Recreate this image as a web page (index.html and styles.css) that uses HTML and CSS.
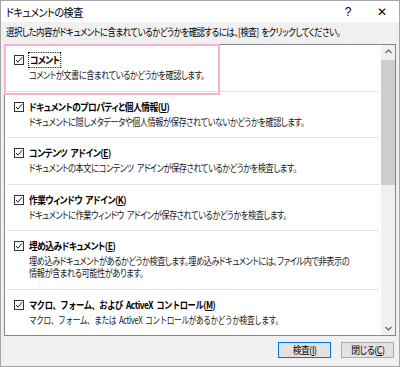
FILE: index.html
```html
<!DOCTYPE html>
<html lang="ja">
<head>
    <meta charset="UTF-8">
    <meta name="viewport" content="width=device-width, initial-scale=1.0">
    <title>ドキュメントの検査</title>
    <link rel="stylesheet" href="styles.css">
</head>
<body>

    <div class="dialog">
        <div class="titlebar">
            <span class="caption"><span class="txt">ドキュメントの検査</span></span>
            <span class="help">?</span>
            <span class="close">✕</span>
        </div>

        <p class="intro"><span class="txt">選択した内容がドキュメントに含まれているかどうかを確認するには、[検査] をクリックしてください。</span></p>

        <div class="listbox">
            <ul class="items">
                <li class="item">
                    <div class="head">
                        <svg class="check" width="10" height="10" viewBox="0 0 10 10"><rect x="0.5" y="0.5" width="9" height="9" fill="#fff" stroke="#333"/><path d="M2 5 L4 7.2 L8 2.2" fill="none" stroke="#222" stroke-width="1"/></svg>
                        <span class="name focus">コメント</span>
                    </div>
                    <div class="desc"><span class="txt">コメントが文書に含まれているかどうかを確認します。</span></div>
                </li>
                <li class="item">
                    <div class="head">
                        <svg class="check" width="10" height="10" viewBox="0 0 10 10"><rect x="0.5" y="0.5" width="9" height="9" fill="#fff" stroke="#333"/><path d="M2 5 L4 7.2 L8 2.2" fill="none" stroke="#222" stroke-width="1"/></svg>
                        <span class="name">ドキュメントのプロパティと個人情報(<u>U</u>)</span>
                    </div>
                    <div class="desc"><span class="txt">ドキュメントに隠しメタデータや個人情報が保存されていないかどうかを確認します。</span></div>
                </li>
                <li class="item">
                    <div class="head">
                        <svg class="check" width="10" height="10" viewBox="0 0 10 10"><rect x="0.5" y="0.5" width="9" height="9" fill="#fff" stroke="#333"/><path d="M2 5 L4 7.2 L8 2.2" fill="none" stroke="#222" stroke-width="1"/></svg>
                        <span class="name">コンテンツ アドイン(<u>E</u>)</span>
                    </div>
                    <div class="desc"><span class="txt">ドキュメントの本文にコンテンツ アドインが保存されているかどうかを検査します。</span></div>
                </li>
                <li class="item">
                    <div class="head">
                        <svg class="check" width="10" height="10" viewBox="0 0 10 10"><rect x="0.5" y="0.5" width="9" height="9" fill="#fff" stroke="#333"/><path d="M2 5 L4 7.2 L8 2.2" fill="none" stroke="#222" stroke-width="1"/></svg>
                        <span class="name">作業ウィンドウ アドイン(<u>K</u>)</span>
                    </div>
                    <div class="desc"><span class="txt">ドキュメントに作業ウィンドウ アドインが保存されているかどうかを検査します。</span></div>
                </li>
                <li class="item">
                    <div class="head">
                        <svg class="check" width="10" height="10" viewBox="0 0 10 10"><rect x="0.5" y="0.5" width="9" height="9" fill="#fff" stroke="#333"/><path d="M2 5 L4 7.2 L8 2.2" fill="none" stroke="#222" stroke-width="1"/></svg>
                        <span class="name">埋め込みドキュメント(<u>E</u>)</span>
                    </div>
                    <div class="desc"><span class="txt wrap">埋め込みドキュメントがあるかどうか検査します。埋め込みドキュメントには、ファイル内で非表示の情報が含まれる可能性があります。</span></div>
                </li>
                <li class="item plain">
                    <div class="head">
                        <svg class="check" width="10" height="10" viewBox="0 0 10 10"><rect x="0.5" y="0.5" width="9" height="9" fill="#fff" stroke="#333"/><path d="M2 5 L4 7.2 L8 2.2" fill="none" stroke="#222" stroke-width="1"/></svg>
                        <span class="name">マクロ、フォーム、および ActiveX コントロール(<u>M</u>)</span>
                    </div>
                    <div class="desc"><span class="txt">マクロ、フォーム、または ActiveX コントロールがあるかどうか検査します。</span></div>
                </li>
            </ul>

            <div class="scrollbar">
                <svg class="arrow" width="13" height="13" viewBox="0 0 13 13"><path d="M3.5 8 L6.5 5 L9.5 8" fill="none" stroke="#606060" stroke-width="1.2"/></svg>
                <div class="track"><div class="thumb"></div></div>
                <svg class="arrow" width="13" height="13" viewBox="0 0 13 13"><path d="M3.5 5 L6.5 8 L9.5 5" fill="none" stroke="#606060" stroke-width="1.2"/></svg>
            </div>
        </div>

        <div class="actions">
            <button class="btn default"><span class="txt">検査(<u>I</u>)</span></button>
            <button class="btn"><span class="txt">閉じる(<u>C</u>)</span></button>
        </div>

        <!-- annotation box over the first row -->
        <div class="highlight"></div>
    </div>

</body>
</html>
```

FILE: styles.css
```css
* {
    box-sizing: border-box;
}

body {
    margin: 0;
    background-color: #f0f0f0;
    font-family: "Noto Sans CJK JP", sans-serif;
    font-size: 10px;
    font-feature-settings: "palt";
    color: #000;
    overflow: hidden;
}

/* the reference font (Meiryo UI) is much narrower than Noto, so text is squeezed */
.txt {
    display: inline-block;
    white-space: nowrap;
    transform-origin: left center;
}

.dialog {
    position: relative;
    width: 400px;
    height: 367px;
    border: 1px solid #a6a6a6;
    background-color: #f0f0f0;
    display: flex;
    flex-direction: column;
    overflow: hidden;
}

.titlebar {
    height: 21px;
    background-color: #fff;
    display: flex;
    align-items: center;
    padding-left: 5px;
}

.caption {
    flex: 1;
    font-size: 11px;
    letter-spacing: -0.6px;
}

.caption .txt {
    transform: scaleX(0.92);
}

.help {
    width: 34px;
    text-align: center;
    font-family: "Liberation Sans", sans-serif;
    font-size: 12px;
}

.close {
    width: 34px;
    text-align: center;
    font-family: "DejaVu Sans", sans-serif;
    font-size: 12px;
}

.intro {
    margin: 3px 0 0 5px;
    height: 14px;
    line-height: 14px;
    letter-spacing: -0.55px;
    word-spacing: 1.5px;
}

.intro .txt {
    transform: scaleX(0.84);
}

.listbox {
    margin: 5px 3px 0 3px;
    height: 292px;
    border: 1px solid #828790;
    background-color: #fff;
    display: flex;
}

.items {
    flex: 1;
    margin: 0;
    padding: 0 2px;
    list-style: none;
    overflow: hidden;
}

.item {
    padding: 7px 0 9.5px 0;
    border-bottom: 1px solid #e3e3e3;
}

.item.plain {
    font-feature-settings: normal;
}

.head {
    display: flex;
    align-items: center;
    gap: 5px;
    padding-left: 7px;
    height: 16px;
}

.name {
    display: inline-block;
    white-space: nowrap;
    font-weight: bold;
    letter-spacing: -0.55px;
    word-spacing: 2px;
    line-height: 14px;
    transform: scaleX(0.87);
    transform-origin: left center;
}

.name.focus {
    outline: 1px dotted #000;
    outline-offset: 0;
    padding: 0 1px;
}

.desc {
    padding: 1px 0 0 22px;
    line-height: 12px;
    letter-spacing: -0.55px;
    word-spacing: 2px;
    color: #1a1a1a;
}

.desc .txt {
    transform: scaleX(0.82);
}

.desc .txt.wrap {
    white-space: normal;
    width: 396px;
}

.plain .name {
    transform: scaleX(0.83);
}

.plain .desc .txt {
    transform: scaleX(0.77);
}

.scrollbar {
    width: 14px;
    background-color: #f0f0f0;
    display: flex;
    flex-direction: column;
    align-items: center;
}

.arrow {
    flex: none;
}

.track {
    flex: 1;
    width: 100%;
    padding-top: 2px;
}

.thumb {
    height: 125px;
    background-color: #cdcdcd;
}

.actions {
    display: flex;
    justify-content: flex-end;
    gap: 10px;
    margin: 6px 5px 0 0;
}

.btn {
    height: 16px;
    width: 53px;
    padding: 0;
    font-family: "Noto Sans CJK JP", sans-serif;
    font-size: 10px;
    font-feature-settings: "palt";
    letter-spacing: -0.5px;
    line-height: 14px;
    background-color: #e1e1e1;
    border: 1px solid #adadad;
    color: #000;
    overflow: hidden;
}

.btn .txt {
    transform: scaleX(0.88);
    transform-origin: center center;
}

.btn.default {
    border-color: #0078d7;
}

.highlight {
    position: absolute;
    left: 3px;
    top: 43px;
    width: 216px;
    height: 51px;
    border: 2px solid #f3b3cf;
    pointer-events: none;
}
```
